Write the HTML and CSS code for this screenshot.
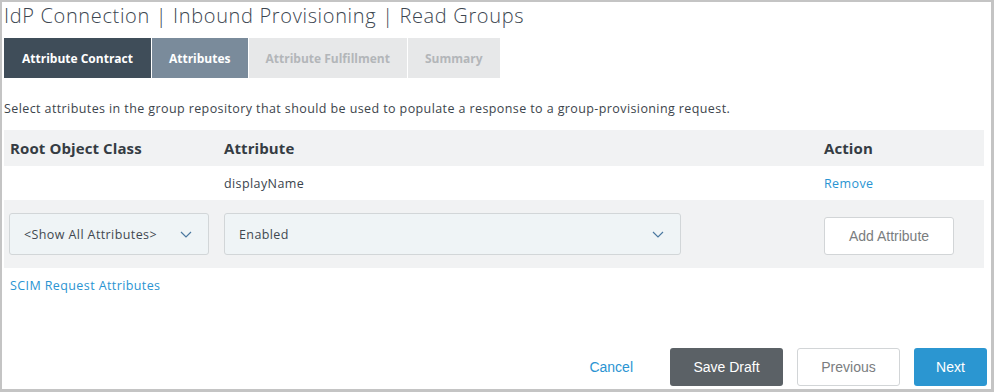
FILE: index.html
```html
<!DOCTYPE html>
<html lang="en">
<head>
    <meta charset="UTF-8">
    <title>IdP Connection | Inbound Provisioning | Read Groups</title>
    <link rel="stylesheet" href="styles.css">
</head>
<body>
    <div class="frame">
        <h1 class="page-title">IdP Connection | Inbound Provisioning | Read Groups</h1>

        <div class="tabs">
            <div class="tabs__item tabs__item--done">Attribute Contract</div>
            <div class="tabs__item tabs__item--active">Attributes</div>
            <div class="tabs__item">Attribute Fulfillment</div>
            <div class="tabs__item">Summary</div>
        </div>

        <p class="intro">Select attributes in the group repository that should be used to populate a response to a group-provisioning request.</p>

        <div class="grid">
            <div class="grid__row grid__row--head">
                <div class="grid__cell grid__cell--first">Root Object Class</div>
                <div class="grid__cell">Attribute</div>
                <div class="grid__cell">Action</div>
            </div>
            <div class="grid__row grid__row--item">
                <div class="grid__cell grid__cell--first"></div>
                <div class="grid__cell">displayName</div>
                <div class="grid__cell"><a class="link">Remove</a></div>
            </div>
            <div class="grid__row grid__row--add">
                <div class="grid__cell grid__cell--select">
                    <div class="select select--small">
                        <span>&lt;Show All Attributes&gt;</span>
                        <svg class="select__arrow" width="12" height="7" viewBox="0 0 12 7"><path d="M1 1l5 5 5-5" fill="none" stroke="#4b78a0" stroke-width="1.2"/></svg>
                    </div>
                </div>
                <div class="grid__cell">
                    <div class="select select--wide">
                        <span>Enabled</span>
                        <svg class="select__arrow" width="12" height="7" viewBox="0 0 12 7"><path d="M1 1l5 5 5-5" fill="none" stroke="#4b78a0" stroke-width="1.2"/></svg>
                    </div>
                </div>
                <div class="grid__cell">
                    <button class="btn btn--outline btn--add">Add Attribute</button>
                </div>
            </div>
        </div>

        <a class="link scim-link">SCIM Request Attributes</a>

        <div class="footer">
            <a class="link footer__cancel">Cancel</a>
            <button class="btn btn--dark">Save Draft</button>
            <button class="btn btn--outline btn--prev">Previous</button>
            <button class="btn btn--primary">Next</button>
        </div>
    </div>
</body>
</html>
```

FILE: styles.css
```css
* {
    margin: 0;
    padding: 0;
    box-sizing: border-box;
}

body {
    font-family: "Open Sans", Arial, sans-serif;
    color: #3a434c;
    background-color: #ffffff;
    letter-spacing: 0.4px;
}

.frame {
    height: 392px;
    border-style: solid;
    border-color: #c4c4c4;
    border-width: 2px 3px 3px 2px;
    padding: 0 4px 0 2px;
    display: flex;
    flex-direction: column;
}

.page-title {
    font-size: 20px;
    font-weight: 300;
    color: #3c4650;
    line-height: 24px;
    margin-top: 2px;
    letter-spacing: 0.65px;
}

.tabs {
    display: flex;
    gap: 1px;
    margin-top: 10px;
    height: 40px;
}

.tabs__item {
    padding: 0 17px;
    display: flex;
    align-items: center;
    font-size: 12px;
    font-weight: 700;
    letter-spacing: 0;
    color: #b3b6b9;
    background-color: #e7e8e9;
}

.tabs__item--done {
    padding: 0 18px;
    background-color: #3f4d59;
    color: #ffffff;
}

.tabs__item--active {
    background-color: #7a8b9b;
    color: #ffffff;
}

.intro {
    font-size: 12.5px;
    margin-top: 23px;
    line-height: 16px;
    color: #3d454c;
}

.grid {
    margin-top: 13px;
    margin-right: 3px;
}

.grid__row {
    display: grid;
    grid-template-columns: 220px 600px 1fr;
    align-items: center;
}

.grid__row--head {
    height: 36px;
    background-color: #f1f2f3;
    font-size: 15px;
    font-weight: 700;
    letter-spacing: 0.1px;
    color: #353c43;
}

.grid__row--item {
    height: 34px;
    font-size: 12.5px;
    padding-top: 1px;
}

.grid__row--add {
    height: 68px;
    background-color: #f1f2f3;
}

.grid__cell--first {
    padding-left: 6px;
}

.grid__cell--select {
    padding-left: 5px;
}

.select {
    height: 42px;
    border: 1px solid #d2d6d8;
    border-radius: 3px;
    background-color: #eff4f6;
    display: flex;
    align-items: center;
    justify-content: space-between;
    font-size: 12.5px;
    color: #3f4850;
    padding: 0 16px 0 14px;
}

.select--small {
    width: 200px;
}

.select--wide {
    width: 457px;
}

.link {
    color: #2a94d2;
    font-size: 12.5px;
    cursor: pointer;
}

.scim-link {
    margin-top: 9px;
    margin-left: 6px;
}

.btn {
    font-family: Arial, "Liberation Sans", sans-serif;
    font-size: 14px;
    letter-spacing: 0;
    height: 38px;
    border-radius: 3px;
    border: 1px solid transparent;
    cursor: pointer;
}

.btn--outline {
    background-color: #ffffff;
    border-color: #d2d5d7;
    color: #7a7d80;
}

.btn--add {
    width: 130px;
    height: 38px;
    margin-top: 3px;
}

.btn--dark {
    width: 113px;
    background-color: #5b6166;
    color: #ffffff;
    margin-left: 37px;
}

.btn--prev {
    width: 103px;
    margin-left: 14px;
}

.btn--primary {
    width: 73px;
    background-color: #2b96d1;
    color: #ffffff;
    margin-left: 14px;
}

.footer {
    margin-top: auto;
    display: flex;
    justify-content: flex-end;
    align-items: center;
    padding-bottom: 3px;
}

.footer__cancel {
    font-family: Arial, "Liberation Sans", sans-serif;
    font-size: 14px;
    letter-spacing: 0;
}
```
